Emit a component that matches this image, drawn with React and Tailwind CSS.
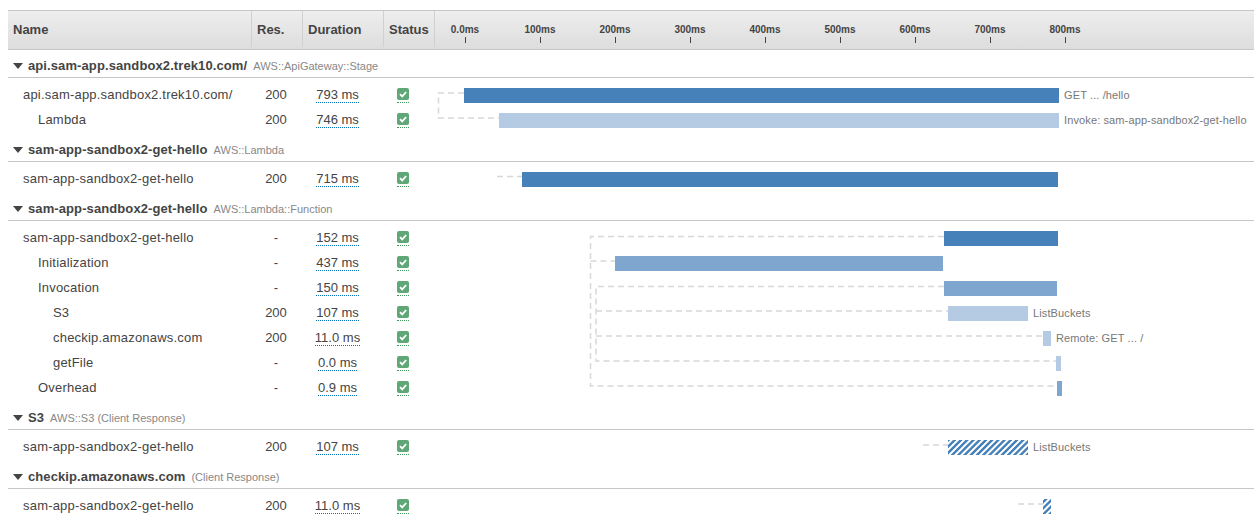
import React from 'react';

const DARK = 'bg-[#4781b9]';
const MID = 'bg-[#7fa6cf]';
const LIGHT = 'bg-[#b5cbe3]';
const HATCH = 'bg-[repeating-linear-gradient(-45deg,#4781b9_0px,#4781b9_1.6px,#ffffff_2.4px,#ffffff_3.6px,#4781b9_4.4px)]';

// bars use page x coordinates, the timeline column starts at 435
const TIMELINE_X = 435;

const ticks = [
  { label: '0.0ms', x: 465 },
  { label: '100ms', x: 540 },
  { label: '200ms', x: 615 },
  { label: '300ms', x: 690 },
  { label: '400ms', x: 765 },
  { label: '500ms', x: 840 },
  { label: '600ms', x: 915 },
  { label: '700ms', x: 990 },
  { label: '800ms', x: 1065 },
];

const groups = [
  {
    name: 'api.sam-app.sandbox2.trek10.com/',
    type: 'AWS::ApiGateway::Stage',
    rows: [
      { name: 'api.sam-app.sandbox2.trek10.com/', res: '200', dur: '793 ms', from: 464, to: 1059, color: DARK, label: 'GET ... /hello' },
      { name: 'Lambda', level: 1, res: '200', dur: '746 ms', from: 499, to: 1059, color: LIGHT, label: 'Invoke: sam-app-sandbox2-get-hello' },
    ],
  },
  {
    name: 'sam-app-sandbox2-get-hello',
    type: 'AWS::Lambda',
    rows: [
      { name: 'sam-app-sandbox2-get-hello', res: '200', dur: '715 ms', from: 522, to: 1058, color: DARK },
    ],
  },
  {
    name: 'sam-app-sandbox2-get-hello',
    type: 'AWS::Lambda::Function',
    rows: [
      { name: 'sam-app-sandbox2-get-hello', res: '-', dur: '152 ms', from: 944, to: 1058, color: DARK },
      { name: 'Initialization', level: 1, res: '-', dur: '437 ms', from: 615, to: 943, color: MID },
      { name: 'Invocation', level: 1, res: '-', dur: '150 ms', from: 944, to: 1057, color: MID },
      { name: 'S3', level: 2, res: '200', dur: '107 ms', from: 948, to: 1028, color: LIGHT, label: 'ListBuckets' },
      { name: 'checkip.amazonaws.com', level: 2, res: '200', dur: '11.0 ms', from: 1043, to: 1051, color: LIGHT, label: 'Remote: GET ... /' },
      { name: 'getFile', level: 2, res: '-', dur: '0.0 ms', from: 1056, to: 1061, color: LIGHT },
      { name: 'Overhead', level: 1, res: '-', dur: '0.9 ms', from: 1057, to: 1062, color: MID },
    ],
  },
  {
    name: 'S3',
    type: 'AWS::S3 (Client Response)',
    rows: [
      { name: 'sam-app-sandbox2-get-hello', res: '200', dur: '107 ms', from: 948, to: 1028, color: HATCH, label: 'ListBuckets' },
    ],
  },
  {
    name: 'checkip.amazonaws.com',
    type: '(Client Response)',
    rows: [
      { name: 'sam-app-sandbox2-get-hello', res: '200', dur: '11.0 ms', from: 1043, to: 1051, color: HATCH },
    ],
  },
];

// dashed lines between the spans
const connectors = [
  'M464 93H438.5V118H499',
  'M497 176.5H522',
  'M944 236.5H590.5V386H1057',
  'M590.5 261H615',
  'M944 286.5H596V361H1056',
  'M596 311H948',
  'M596 336H1043',
  'M923 445H948',
  'M1018 504H1043',
];

const indents = ['pl-[15px]', 'pl-[30px]', 'pl-[45px]'];

function HeaderCell({ width, children }) {
  return (
    <div className={`${width} h-[36px] flex items-center pl-[5px] pt-[2px] border-r border-[#d0d0d0] font-bold text-[13px] text-[#444]`}>
      {children}
    </div>
  );
}

function StatusIcon() {
  return (
    <span className="inline-flex h-[16px] items-start border-b border-dotted border-[#3f9a5a]">
      <svg width="12" height="12" viewBox="0 0 12 12" className="mt-[1px]">
        <rect width="12" height="12" rx="2" fill="#5fa777" />
        <path d="M3 6.2 5.2 8.4 9.2 4" fill="none" stroke="#fff" strokeWidth="1.8" />
      </svg>
    </span>
  );
}

function Row({ row }) {
  return (
    <div className="flex h-[25px] items-center text-[13px] text-[#444]">
      <div className={`w-[244px] tracking-[0.2px] ${indents[row.level || 0]}`}>{row.name}</div>
      <div className="w-[51px] pr-[3px] text-center">{row.res}</div>
      <div className="w-[81px] pr-[12px] text-center">
        <span className="inline-block h-[16px] leading-[15px] border-b border-dotted border-[#0073bb]">{row.dur}</span>
      </div>
      <div className="w-[51px] pr-[13px] flex justify-center"><StatusIcon /></div>
      <div className="relative flex-1 h-full">
        <div
          className={`absolute top-[6px] h-[15px] ${row.color}`}
          style={{ left: row.from - TIMELINE_X, width: row.to - row.from }}
        />
        {row.label && (
          <span
            className="absolute top-[5px] leading-[17px] text-[11px] tracking-[0.12px] text-[#777] whitespace-nowrap"
            style={{ left: row.to - TIMELINE_X + 5 }}
          >
            {row.label}
          </span>
        )}
      </div>
    </div>
  );
}

function Group({ group, first }) {
  return (
    <div>
      <div className={`${first ? 'h-[27px]' : 'h-[29px]'} flex items-end pb-[3px] pl-[5px]`}>
        <svg width="10" height="6" viewBox="0 0 10 6" className="mr-[5px] mb-[5px] shrink-0">
          <path d="M0 0H10L5 6Z" fill="#444" />
        </svg>
        <span className="font-bold text-[13px] leading-[16px] tracking-[0.1px] text-[#444]">{group.name}</span>
        <span className="ml-[6px] text-[11px] leading-[16px] text-[#888]">{group.type}</span>
      </div>
      <div className="border-t border-[#c6c6c6] pt-[4px]">
        {group.rows.map((row, i) => (
          <Row key={i} row={row} />
        ))}
      </div>
    </div>
  );
}

export default function App() {
  return (
    <div className="relative w-[1254px] h-[523px] overflow-hidden bg-white pt-[10px] pl-[8px] font-['Liberation_Sans',Arial,sans-serif]">
      <div className="flex h-[40px] border-y border-[#c6c6c6] bg-gradient-to-b from-[#eeeeee] to-[#dddddd]">
        <HeaderCell width="w-[244px]">Name</HeaderCell>
        <HeaderCell width="w-[51px]">Res.</HeaderCell>
        <HeaderCell width="w-[81px]">Duration</HeaderCell>
        <HeaderCell width="w-[51px]">Status</HeaderCell>
        <div className="relative flex-1">
          {ticks.map((t) => (
            <div
              key={t.label}
              className="absolute top-[12px] flex w-[50px] -translate-x-1/2 flex-col items-center"
              style={{ left: t.x - TIMELINE_X }}
            >
              <span className="text-[10px] leading-[13px] font-bold text-[#444]">{t.label}</span>
              <span className="mt-[1px] h-[6px] w-px bg-[#444]" />
            </div>
          ))}
        </div>
      </div>
      {groups.map((group, i) => (
        <Group key={i} group={group} first={i === 0} />
      ))}
      <svg width="1254" height="523" className="absolute left-0 top-0 pointer-events-none">
        {connectors.map((d) => (
          <path key={d} d={d} fill="none" stroke="#d8d8d8" strokeWidth="1.5" strokeDasharray="6 4" />
        ))}
      </svg>
    </div>
  );
}
